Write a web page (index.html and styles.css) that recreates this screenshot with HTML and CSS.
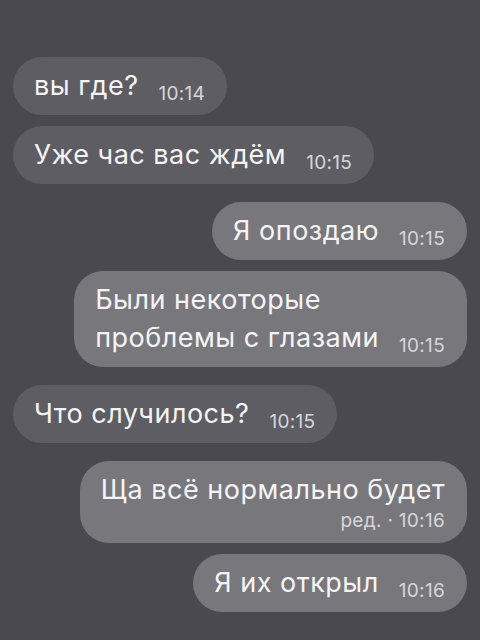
FILE: index.html
```html
<!DOCTYPE html>
<html lang="ru">
<head>
    <meta charset="UTF-8">
    <meta name="viewport" content="width=device-width, initial-scale=1.0">
    <title>Чат</title>
    <link rel="stylesheet" href="styles.css">
</head>
<body>
    <div class="chat">
        <div class="msg in"><span class="text">вы где?</span><span class="time">10:14</span></div>
        <div class="msg in"><span class="text">Уже час вас ждём</span><span class="time">10:15</span></div>
        <div class="msg out gap"><span class="text">Я опоздаю</span><span class="time">10:15</span></div>
        <div class="msg out"><span class="text">Были некоторые<br>проблемы с глазами</span><span class="time">10:15</span></div>
        <div class="msg in gap"><span class="text">Что случилось?</span><span class="time">10:15</span></div>
        <div class="msg out gap"><span class="text">Ща всё нормально будет</span><span class="meta">ред. · 10:16</span></div>
        <div class="msg out"><span class="text">Я их открыл</span><span class="time">10:16</span></div>
    </div>
</body>
</html>
```

FILE: styles.css
```css
body {
    margin: 0;
    background: #4a4950;
    font-family: Inter, "Liberation Sans", sans-serif;
    color: #f4f4f6;
}
.chat {
    display: flex;
    flex-direction: column;
    gap: 11px;
    padding: 57px 13px 0;
}
.msg {
    border-radius: 29px;
    padding: 10px 22px 10px 21px;
    font-size: 27px;
    line-height: 38px;
    letter-spacing: 0.5px;
}
.msg.gap {
    margin-top: 7px;
}
.in {
    align-self: flex-start;
    background: #5e5d63;
}
.out {
    align-self: flex-end;
    background: #78777c;
}
.time {
    margin-left: 20px;
    font-size: 19px;
    line-height: 20px;
    vertical-align: -5px;
    letter-spacing: 0.3px;
    color: #d6d6da;
}
.meta {
    display: block;
    text-align: right;
    font-size: 19px;
    line-height: 24px;
    letter-spacing: 0.3px;
    color: #d6d6da;
}
```
